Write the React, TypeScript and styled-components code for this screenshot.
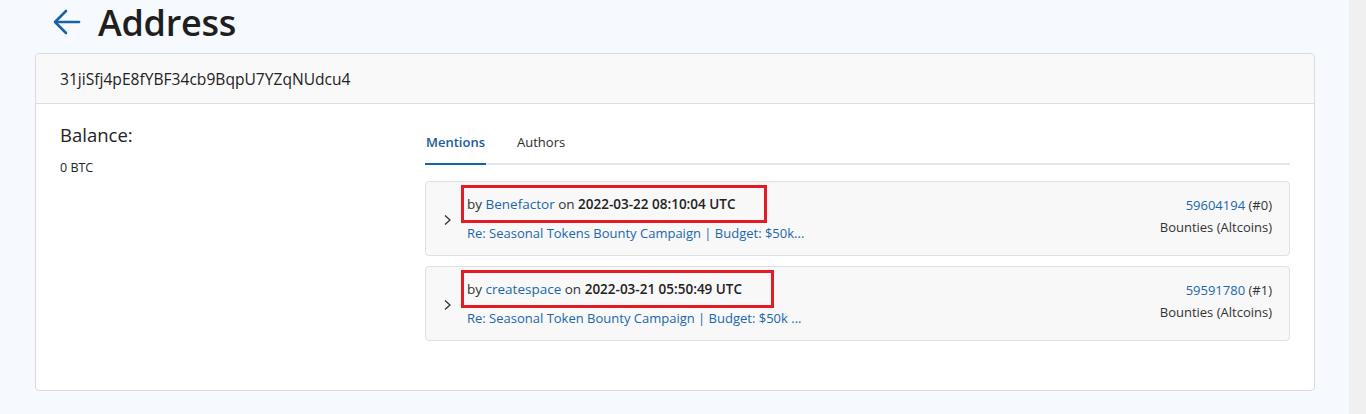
import styled, { createGlobalStyle } from "styled-components";

const GlobalStyle = createGlobalStyle`
    body {
        margin: 0;
        font-family: "Open Sans", "Noto Sans", sans-serif;
        color: #212529;
        background: #f0f0f0;
    }
`;

const Page = styled.div`
    display: flex;
    min-height: 414px;
`;

const Main = styled.main`
    flex: 1;
    background: #f6f9fe;
    padding: 0 34px 24px 35px;
`;

const Gutter = styled.div`
    width: 17px;
    background: #f0f0f0;
`;

const TitleRow = styled.div`
    display: flex;
    align-items: center;
    height: 44px;
    padding-left: 18px;
    gap: 17px;
    margin-bottom: 9px;
`;

const BackLink = styled.a`
    display: flex;
    color: #1663a6;
`;

const Title = styled.h1`
    margin: 0;
    font-size: 36px;
    font-weight: 600;
    color: #1f1f1f;
    letter-spacing: -0.3px;
`;

const Card = styled.section`
    background: white;
    border: 1px solid #dcdcdc;
    border-radius: 4px;
`;

const CardHeader = styled.div`
    height: 49px;
    display: flex;
    align-items: center;
    padding-left: 24px;
    background: #f9f9f9;
    border-bottom: 1px solid #dedede;
    border-radius: 4px 4px 0 0;
    font-size: 15.6px;
    font-weight: 500;
    color: #222;
`;

const CardBody = styled.div`
    display: grid;
    grid-template-columns: 365px 1fr;
    padding: 18px 24px 49px 24px;
`;

const BalanceTitle = styled.h3`
    margin: 0 0 12px;
    font-size: 18.5px;
    font-weight: 500;
    color: #222;
`;

const BalanceValue = styled.div`
    font-size: 12.5px;
`;

const Tabs = styled.nav`
    display: flex;
    gap: 30px;
    border-bottom: 2px solid #e3e6ea;
    margin-top: 11px;
    margin-bottom: 16px;
`;

const Tab = styled.a<{ $active?: boolean }>`
    font-size: 13px;
    font-weight: ${(p) => (p.$active ? 600 : 400)};
    color: ${(p) => (p.$active ? "#1a5b96" : "#2a2a2a")};
    padding: 0 1px 12px;
    margin-bottom: -2px;
    border-bottom: 2px solid ${(p) => (p.$active ? "#1663a6" : "transparent")};
`;

const List = styled.div`
    display: flex;
    flex-direction: column;
    gap: 10px;
`;

const Item = styled.div`
    display: flex;
    align-items: flex-start;
    height: 75px;
    box-sizing: border-box;
    background: #f8f8f8;
    border: 1px solid #e0e0e0;
    border-radius: 4px;
    padding: 3px 17px 0 17px;
    font-size: 13px;
`;

const Chevron = styled.span`
    display: flex;
    align-self: center;
    width: 24px;
    color: #333;
    margin-top: -1px;
`;

const Summary = styled.div`
    flex: 1;
    display: flex;
    flex-direction: column;
    gap: 1px;
    line-height: 18px;
`;

/* highlighted "by … on …" line */
const Meta = styled.div`
    align-self: flex-start;
    margin-left: -6px;
    padding: 7px 29px 7px 3px;
    border: 3px solid #e31b23;
    font-size: 13.5px;
`;

const Strong = styled.strong`
    font-weight: 600;
    color: #222;
`;

const Link = styled.a`
    color: #1a67aa;
    text-decoration: none;
`;

const Aside = styled.div`
    display: flex;
    flex-direction: column;
    align-items: flex-end;
    gap: 4px;
    padding-top: 11px;
    line-height: 18px;
`;

const Muted = styled.span`
    color: #333;
`;

type Mention = {
    author: string;
    date: string;
    subject: string;
    msg: string;
    idx: number;
};

const mentions: Mention[] = [
    {
        author: "Benefactor",
        date: "2022-03-22 08:10:04 UTC",
        subject: "Re: Seasonal Tokens Bounty Campaign | Budget: $50k...",
        msg: "59604194",
        idx: 0,
    },
    {
        author: "createspace",
        date: "2022-03-21 05:50:49 UTC",
        subject: "Re: Seasonal Token Bounty Campaign | Budget: $50k ...",
        msg: "59591780",
        idx: 1,
    },
];

export default function App() {
    return (
        <Page>
            <GlobalStyle />
            <Main>
                <TitleRow>
                    <BackLink href="#">
                        <svg width="28" height="26" viewBox="0 0 28 26" fill="none" stroke="currentColor" strokeWidth="2.6" strokeLinecap="round" strokeLinejoin="round">
                            <path d="M26 13H3" />
                            <path d="M13 2L2 13l11 11" />
                        </svg>
                    </BackLink>
                    <Title>Address</Title>
                </TitleRow>

                <Card>
                    <CardHeader>31jiSfj4pE8fYBF34cb9BqpU7YZqNUdcu4</CardHeader>
                    <CardBody>
                        <div>
                            <BalanceTitle>Balance:</BalanceTitle>
                            <BalanceValue>0 BTC</BalanceValue>
                        </div>
                        <div>
                            <Tabs>
                                <Tab $active>Mentions</Tab>
                                <Tab>Authors</Tab>
                            </Tabs>
                            <List>
                                {mentions.map((m) => (
                                    <Item key={m.msg}>
                                        <Chevron>
                                            <svg width="9" height="12" viewBox="0 0 9 12" fill="none" stroke="currentColor" strokeWidth="1.3">
                                                <path d="M2 1.5l5 4.5-5 4.5" />
                                            </svg>
                                        </Chevron>
                                        <Summary>
                                            <Meta>
                                                <Muted>by </Muted>
                                                <Link href="#">{m.author}</Link>
                                                <Muted> on </Muted>
                                                <Strong>{m.date}</Strong>
                                            </Meta>
                                            <Link href="#">{m.subject}</Link>
                                        </Summary>
                                        <Aside>
                                            <span>
                                                <Link href="#">{m.msg}</Link>
                                                <Muted> (#{m.idx})</Muted>
                                            </span>
                                            <Muted>Bounties (Altcoins)</Muted>
                                        </Aside>
                                    </Item>
                                ))}
                            </List>
                        </div>
                    </CardBody>
                </Card>
            </Main>
            <Gutter />
        </Page>
    );
}
